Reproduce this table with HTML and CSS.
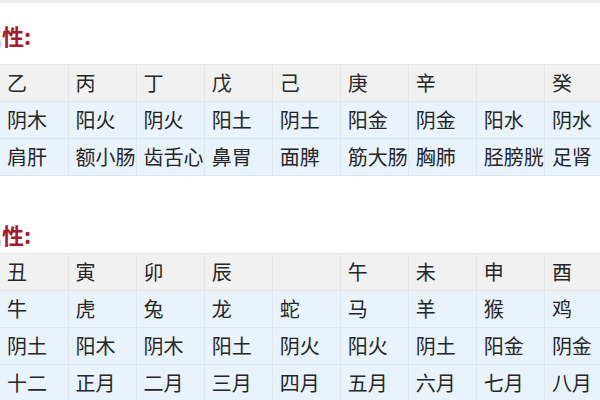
FILE: index.html
```html
<!DOCTYPE html>
<html lang="zh">
<head>
<meta charset="utf-8">
<link rel="stylesheet" href="styles.css">
</head>
<body>
<div class="topline"></div>
<h2 class="title">属性:</h2>
<table class="grid">
  <tr class="head"><td>乙</td><td>丙</td><td>丁</td><td>戊</td><td>己</td><td>庚</td><td>辛</td><td></td><td>癸</td></tr>
  <tr><td>阴木</td><td>阳火</td><td>阴火</td><td>阳土</td><td>阴土</td><td>阳金</td><td>阴金</td><td>阳水</td><td>阴水</td></tr>
  <tr><td>肩肝</td><td>额小肠</td><td>齿舌心</td><td>鼻胃</td><td>面脾</td><td>筋大肠</td><td>胸肺</td><td>胫膀胱</td><td>足肾</td></tr>
</table>
<h2 class="title second">属性:</h2>
<table class="grid">
  <tr class="head"><td>丑</td><td>寅</td><td>卯</td><td>辰</td><td></td><td>午</td><td>未</td><td>申</td><td>酉</td></tr>
  <tr><td>牛</td><td>虎</td><td>兔</td><td>龙</td><td>蛇</td><td>马</td><td>羊</td><td>猴</td><td>鸡</td></tr>
  <tr><td>阴土</td><td>阳木</td><td>阴木</td><td>阳土</td><td>阴火</td><td>阳火</td><td>阴土</td><td>阳金</td><td>阴金</td></tr>
  <tr><td>十二</td><td>正月</td><td>二月</td><td>三月</td><td>四月</td><td>五月</td><td>六月</td><td>七月</td><td>八月</td></tr>
</table>
</body>
</html>
```
FILE: styles.css
```css
html, body {
  margin: 0;
  padding: 0;
  background: #fff;
  overflow: hidden;
  width: 600px;
  height: 400px;
}
body {
  font-family: "Noto Sans CJK SC", "Noto Sans", sans-serif;
  color: #262626;
}
.topline {
  height: 3px;
  background: #ececec;
}
.title {
  margin: 17px 0 14px -20px;
  height: 30px;
  line-height: 30px;
  font-size: 22px;
  font-weight: bold;
  color: #a51c2c;
  white-space: nowrap;
}
.title.second {
  margin-top: 43px;
  margin-bottom: 4px;
}
.grid {
  border-collapse: collapse;
  table-layout: fixed;
  width: 613px;
}
.grid td {
  width: 68px;
  height: 36px;
  padding: 0 0 0 7px;
  font-size: 20px;
  line-height: 36px;
  background: #e9f3fb;
  border: 1px solid #dfe7ee;
  border-top-color: #f4f8fb;
  white-space: nowrap;
  overflow: hidden;
  box-sizing: border-box;
}
.grid tr.head td {
  background: #f1f1f1;
  border-color: #e6e6e6;
}
.grid td:first-child {
  border-left: none;
}
```
